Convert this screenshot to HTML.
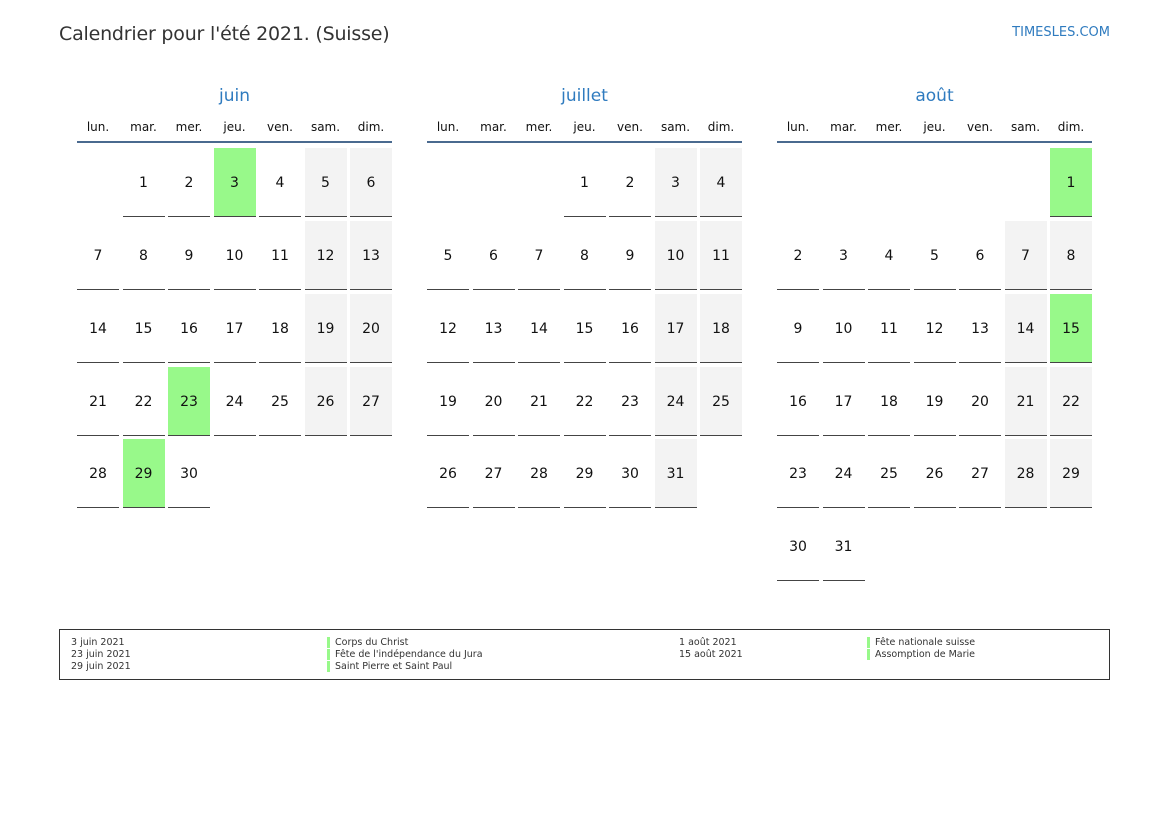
<!DOCTYPE html>
<html><head><meta charset="utf-8"><style>
*{margin:0;padding:0;box-sizing:border-box}
body{width:1169px;height:827px;background:#fff;font-family:"DejaVu Sans","Liberation Sans",sans-serif;color:#111;position:relative;overflow:hidden}
.t{position:absolute;left:59px;top:23px;font-size:19px;color:#333;letter-spacing:-0.2px}
.logo{position:absolute;right:59px;top:25px;font-size:13px;color:#2f7bbf}
.m{position:absolute;top:0;width:315px;height:600px}
.mt{position:absolute;top:86px;left:0;width:315px;text-align:center;font-size:17px;color:#2f7bbf}
.wd{position:absolute;top:120px;width:42px;text-align:center;font-size:12px;color:#111}
.ln{position:absolute;top:141px;left:0;width:315px;height:2px;background:#4a6a8f}
.c{position:absolute;width:42px;height:69px;border-bottom:1.5px solid #444;line-height:70px;text-align:center;font-size:14px}
.w{background:#f3f3f3}.h{background:#98f98a}
.d0{left:0}.d1{left:45.5px}.d2{left:91px}.d3{left:136.5px}.d4{left:182px}.d5{left:227.5px}.d6{left:273px}
.r0{top:148px}.r1{top:221px}.r2{top:294px}.r3{top:367px}.r4{top:439px}.r5{top:512px}
.lg{position:absolute;left:59px;top:629px;width:1051px;height:51px;border:1px solid #333;font-size:9.5px;color:#333;line-height:12px}
.lg div{position:absolute;top:7px}
.b{border-left:3px solid #98f98a;padding-left:5px;display:block;height:11px;margin-bottom:1px;line-height:12px}
</style></head><body>
<div class="t">Calendrier pour l'été 2021. (Suisse)</div>
<div class="logo">TIMESLES.COM</div>

<div class="m" style="left:77px">
<div class="mt">juin</div>
<div class="wd d0">lun.</div><div class="wd d1">mar.</div><div class="wd d2">mer.</div><div class="wd d3">jeu.</div><div class="wd d4">ven.</div><div class="wd d5">sam.</div><div class="wd d6">dim.</div>
<div class="ln"></div>
<div class="c d1 r0">1</div><div class="c d2 r0">2</div><div class="c d3 r0 h">3</div><div class="c d4 r0">4</div><div class="c d5 r0 w">5</div><div class="c d6 r0 w">6</div>
<div class="c d0 r1">7</div><div class="c d1 r1">8</div><div class="c d2 r1">9</div><div class="c d3 r1">10</div><div class="c d4 r1">11</div><div class="c d5 r1 w">12</div><div class="c d6 r1 w">13</div>
<div class="c d0 r2">14</div><div class="c d1 r2">15</div><div class="c d2 r2">16</div><div class="c d3 r2">17</div><div class="c d4 r2">18</div><div class="c d5 r2 w">19</div><div class="c d6 r2 w">20</div>
<div class="c d0 r3">21</div><div class="c d1 r3">22</div><div class="c d2 r3 h">23</div><div class="c d3 r3">24</div><div class="c d4 r3">25</div><div class="c d5 r3 w">26</div><div class="c d6 r3 w">27</div>
<div class="c d0 r4">28</div><div class="c d1 r4 h">29</div><div class="c d2 r4">30</div>
</div>

<div class="m" style="left:427px">
<div class="mt">juillet</div>
<div class="wd d0">lun.</div><div class="wd d1">mar.</div><div class="wd d2">mer.</div><div class="wd d3">jeu.</div><div class="wd d4">ven.</div><div class="wd d5">sam.</div><div class="wd d6">dim.</div>
<div class="ln"></div>
<div class="c d3 r0">1</div><div class="c d4 r0">2</div><div class="c d5 r0 w">3</div><div class="c d6 r0 w">4</div>
<div class="c d0 r1">5</div><div class="c d1 r1">6</div><div class="c d2 r1">7</div><div class="c d3 r1">8</div><div class="c d4 r1">9</div><div class="c d5 r1 w">10</div><div class="c d6 r1 w">11</div>
<div class="c d0 r2">12</div><div class="c d1 r2">13</div><div class="c d2 r2">14</div><div class="c d3 r2">15</div><div class="c d4 r2">16</div><div class="c d5 r2 w">17</div><div class="c d6 r2 w">18</div>
<div class="c d0 r3">19</div><div class="c d1 r3">20</div><div class="c d2 r3">21</div><div class="c d3 r3">22</div><div class="c d4 r3">23</div><div class="c d5 r3 w">24</div><div class="c d6 r3 w">25</div>
<div class="c d0 r4">26</div><div class="c d1 r4">27</div><div class="c d2 r4">28</div><div class="c d3 r4">29</div><div class="c d4 r4">30</div><div class="c d5 r4 w">31</div>
</div>

<div class="m" style="left:777px">
<div class="mt">août</div>
<div class="wd d0">lun.</div><div class="wd d1">mar.</div><div class="wd d2">mer.</div><div class="wd d3">jeu.</div><div class="wd d4">ven.</div><div class="wd d5">sam.</div><div class="wd d6">dim.</div>
<div class="ln"></div>
<div class="c d6 r0 h">1</div>
<div class="c d0 r1">2</div><div class="c d1 r1">3</div><div class="c d2 r1">4</div><div class="c d3 r1">5</div><div class="c d4 r1">6</div><div class="c d5 r1 w">7</div><div class="c d6 r1 w">8</div>
<div class="c d0 r2">9</div><div class="c d1 r2">10</div><div class="c d2 r2">11</div><div class="c d3 r2">12</div><div class="c d4 r2">13</div><div class="c d5 r2 w">14</div><div class="c d6 r2 h">15</div>
<div class="c d0 r3">16</div><div class="c d1 r3">17</div><div class="c d2 r3">18</div><div class="c d3 r3">19</div><div class="c d4 r3">20</div><div class="c d5 r3 w">21</div><div class="c d6 r3 w">22</div>
<div class="c d0 r4">23</div><div class="c d1 r4">24</div><div class="c d2 r4">25</div><div class="c d3 r4">26</div><div class="c d4 r4">27</div><div class="c d5 r4 w">28</div><div class="c d6 r4 w">29</div>
<div class="c d0 r5">30</div><div class="c d1 r5">31</div>
</div>

<div class="lg">
<div style="left:11px">3 juin 2021<br>23 juin 2021<br>29 juin 2021</div>
<div style="left:267px"><span class="b">Corps du Christ</span><span class="b">Fête de l'indépendance du Jura</span><span class="b">Saint Pierre et Saint Paul</span></div>
<div style="left:619px">1 août 2021<br>15 août 2021</div>
<div style="left:807px"><span class="b">Fête nationale suisse</span><span class="b">Assomption de Marie</span></div>
</div>
</body></html>
